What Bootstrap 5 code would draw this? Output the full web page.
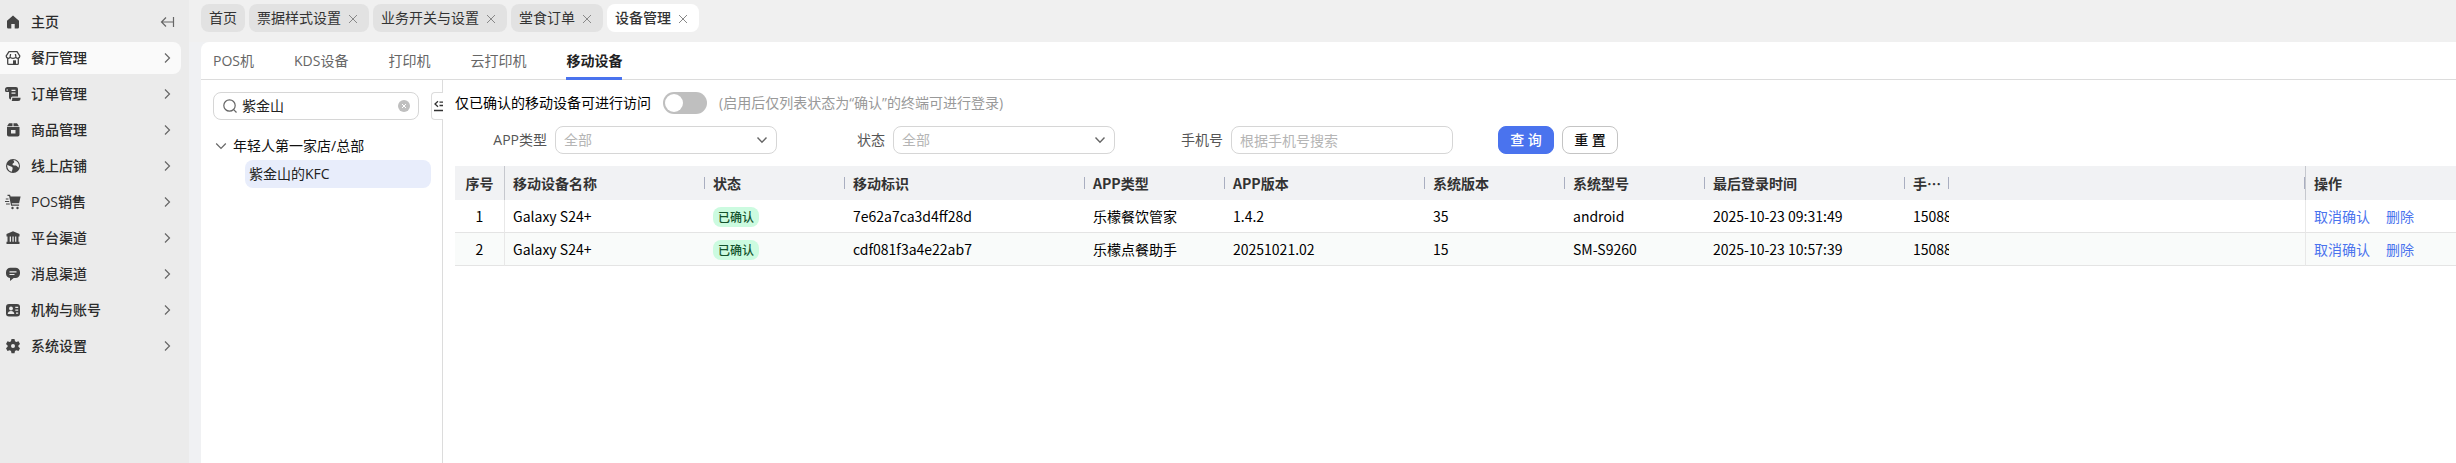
<!DOCTYPE html>
<html lang="zh-CN">
<head>
<meta charset="utf-8">
<meta name="viewport" content="width=device-width, initial-scale=1">
<title>设备管理</title>
<link rel="stylesheet" href="https://cdn.jsdelivr.net/npm/bootstrap@5.3.0/dist/css/bootstrap.min.css">
<style>
:root { --brand: #4a73ee; --line: #dcdcdc; }
body { font: 14px/20px "Open Sans", "Noto Sans CJK SC", sans-serif; color: #000; background: #f0f1f3; }
a { text-decoration: none; }
.side { width: 189px; flex: none; background: #ebebeb; padding-top: 6px; }
.side-link { height: 32px; gap: 10px; padding: 0 6px 0 5px; margin: 0 8px 4px 0; color: #2b2b2b; border-radius: 0 8px 8px 0; font-weight: 500; }
.side-link.active { background: #fafafa; }
.side-link svg { width: 16px; height: 16px; flex: none; fill: #444; }
.side-link .arrow, .ln { fill: none !important; stroke: #666; stroke-width: 1.2; }
.tabs-bar { background: #f0f0f0; height: 42px; padding: 4px 12px 0; gap: 4px; }
.page-tab { height: 28px; padding: 0 8px; gap: 6px; border-radius: 8px; background: #e2e2e2; color: #333; }
.page-tab a { color: inherit; }
.page-tab.active { background: #fff; font-weight: 500; }
.page-tab button { width: 14px; height: 20px; padding: 2px 0 0; border: 0; background: none; display: flex; align-items: center; justify-content: flex-start; }
.page-tab svg { width: 12px; height: 12px; stroke: #888; }
.panel { margin-left: 12px; background: #fff; border-top-left-radius: 8px; }
.sub-tabs { height: 37px; padding: 0 12px; gap: 40px; border-bottom: 1px solid var(--line); box-sizing: content-box; }
.sub-tabs a { color: #666; line-height: 38px; height: 38px; }
.sub-tabs a.active { color: #222; font-weight: 700; border-bottom: 3px solid var(--brand); border-radius: 2px 2px 0 0; }
.tree { width: 242px; flex: none; border-right: 1px solid var(--line); padding: 12px 11px 0 12px; }
.tree-top { gap: 12px; margin-right: -12px; }
.box { height: 28px; border: 1px solid #d6d6d6; border-radius: 8px; background-color: #fff; }
.find { width: 206px; padding: 0 8px; gap: 4px; }
.find input { border: 0; outline: 0; padding: 0; min-width: 0; flex: 1; color: #222; }
.plain { border: 0; background: none; padding: 0; display: flex; }
.fold { width: 12px; height: 28px; border: 1px solid #dcdcdc; border-right: 0; border-radius: 4px 0 0 4px; background: #fff; padding: 0 0 0 2px; display: flex; align-items: center; justify-content: flex-start; overflow: hidden; }
.fold svg { flex: none; }
.tree-row { height: 28px; color: #111; padding-left: 2px; gap: 6px; margin-top: 12px; }
.tree-leaf { display: block; margin-left: 32px; height: 28px; line-height: 28px; padding-left: 4px; border-radius: 8px; background: #e8edfb; color: #222; }
.content { min-width: 0; padding: 12px 0 0 12px; }
.toggle-row { gap: 12px; height: 22px; }
.toggle-row .form-switch { min-height: 0; margin: 0; padding: 0; display: flex; }
.form-switch .form-check-input { width: 44px; height: 22px; margin: 0; border: 0; background-color: #bfbfbf; 
  background-image: url("data:image/svg+xml,%3csvg xmlns='http://www.w3.org/2000/svg' viewBox='0 0 22 22'%3e%3ccircle cx='11' cy='11' r='9' fill='%23fff'/%3e%3c/svg%3e"); }
.filters { margin-top: 12px; height: 28px; }
.filters label { width: 92px; text-align: right; color: #555; }
.field { gap: 8px; margin-right: 16px; width: 322px; }
.field .box { width: 222px; padding: 0 8px; color: #b5b5b5; font-size: 14px; line-height: 20px; }
.field select.box { background-position: right 6px center; background-size: 16px; background-image: url("data:image/svg+xml,%3csvg xmlns='http://www.w3.org/2000/svg' viewBox='0 0 16 16'%3e%3cpath d='M3.5 5.5 8 10.2l4.500-4.700' fill='none' stroke='%23666' stroke-width='1.400'/%3e%3c/svg%3e"); }
.field input::placeholder { color: #b5b5b5; }
.actions { gap: 8px; margin-left: 29px; }
.btn-act { width: 56px; height: 28px; padding: 0; font-size: 14px; line-height: 20px; border-radius: 8px; font-weight: 500; }
.btn-query { background: var(--brand); border-color: var(--brand); color: #fff; }
.btn-reset { border-color: #c4c4c4; color: #111; background: #fff; }
.grid { font-family: "Noto Sans CJK SC", sans-serif; table-layout: fixed; width: 100%; margin-top: 12px; border-collapse: separate; border-spacing: 0; }
.grid th, .grid td { padding: 0 0 0 8px; white-space: nowrap; overflow: hidden; }
.grid th { height: 34px; background: #f1f2f4; color: #333; font-weight: 700; }
.grid td { height: 33px; border-bottom: 1px solid #e4e4e4; }
.grid tbody tr:nth-child(2) td { background: #f9fbfa; }
.grid th.sep { background: linear-gradient(#a9aec0, #a9aec0) right center / 1px 12px no-repeat #f1f2f4; }
.grid .first { text-align: center; padding: 0; border-right: 1px solid #e8e8e8; }
.grid .ops { border-left: 1px solid #e8e8e8; }
.grid th.first, .grid th.ops { border-color: #c6c8ce; }
.grid .ops a { color: var(--brand); margin-right: 16px; }
.state { display: inline-block; font-size: 12px; line-height: 20px; padding: 0 5px; border-radius: 8px; background: #ccfbe0; color: #14532d; vertical-align: middle; font-weight: 500; }
</style>
</head>
<body>
<div class="d-flex min-vh-100">
  <nav class="side">
    <a href="#" class="side-link d-flex align-items-center"><svg viewBox="0 0 16 16"><path d="M8 1.500 14 6.800V13.200a1.300 1.300 0 0 1-1.300 1.300H9.700V10H6.300v4.500h-3A1.300 1.300 0 0 1 2 13.200V6.800z"/></svg><span class="flex-grow-1">主页</span><svg class="arrow" viewBox="0 0 16 16"><path d="M14.500 3v10M14.500 8H3M7 3.500 2.500 8 7 12.500"/></svg></a>
    <a href="#" class="side-link active d-flex align-items-center"><svg viewBox="0 0 16 16"><path d="M4 1.700h8l2.800 4.300c0 2.700-3.300 3-3.900.9-.7 1.900-5.100 1.900-5.800 0C4.500 9 1.200 8.700 1.200 6zM5.100 6.800 5.600 4M10.900 6.800 10.400 4M2.700 8.500v5a.9.9 0 0 0 .9.900h8.800a.9.9 0 0 0 .9-.9v-5" fill="none" stroke="#444" stroke-width="1.300"/><path d="M8 10.300h3v4H8z"/></svg><span class="flex-grow-1">餐厅管理</span><svg class="arrow" viewBox="0 0 16 16"><path d="m6 3.500 4.500 4.500L6 12.500"/></svg></a>
    <a href="#" class="side-link d-flex align-items-center"><svg viewBox="0 0 16 16"><path fill-rule="evenodd" d="M2.500 1H11a2 2 0 0 1 2 2v7.500H7.500A1.500 1.500 0 0 0 6 12v1.500a2 2 0 0 1-2-2V6H1.500A1.500 1.500 0 0 1 0 4.500v-1A2.500 2.500 0 0 1 2.500 1zm4 2.800v1.200h4V3.800zm0 2.800v1.200h4V6.600zM1.500 3.500v1H3v-1zM7.200 11.700h8.300v.8a2.500 2.500 0 0 1-2.500 2.500H6.500c.7-.6.700-1.500.7-3.300z"/></svg><span class="flex-grow-1">订单管理</span><svg class="arrow" viewBox="0 0 16 16"><path d="m6 3.500 4.500 4.500L6 12.500"/></svg></a>
    <a href="#" class="side-link d-flex align-items-center"><svg viewBox="0 0 16 16"><path fill-rule="evenodd" d="M4 1.200h3.500v3H2zM8.500 1.200H12l2 3H8.500zM2 5h12.500v7.700a1.800 1.800 0 0 1-1.800 1.800H3.800A1.800 1.800 0 0 1 2 12.700zM6 8v3.500h4.500V8z"/></svg><span class="flex-grow-1">商品管理</span><svg class="arrow" viewBox="0 0 16 16"><path d="m6 3.500 4.500 4.500L6 12.500"/></svg></a>
    <a href="#" class="side-link d-flex align-items-center"><svg viewBox="0 0 16 16"><circle cx="8" cy="8" r="7"/><path fill="#ebebeb" d="M2.300 6.800c1.600 1.500 3.500 1.200 4.800 2.200 1.200 1 .2 2.500-.3 4.800A6 6 0 0 1 2.300 6.800zM8.500 2.100a6 6 0 0 1 5.300 7.300c-1.200.3-1.600-1.300-2.900-1.800-1-.4-2.600.3-3.300-.8-.7-1.200 1-1.500 1.500-2.300.5-.900-.7-1.500-.6-2.400z"/></svg><span class="flex-grow-1">线上店铺</span><svg class="arrow" viewBox="0 0 16 16"><path d="m6 3.500 4.500 4.500L6 12.500"/></svg></a>
    <a href="#" class="side-link d-flex align-items-center"><svg viewBox="0 0 16 16"><path d="M2.500.8H5l.6 1.700H15.600l-1.500 6.700H6.800l.3 1.300h7v1.200H6.100L4.100 2H2.500zM.8 4.500h2.700v1H.8zM0 7h4.200v1H0zM1 9.500h3.800v1H1z"/><circle cx="7.500" cy="14" r="1.200"/><circle cx="12.500" cy="14" r="1.200"/></svg><span class="flex-grow-1">POS销售</span><svg class="arrow" viewBox="0 0 16 16"><path d="m6 3.500 4.500 4.500L6 12.500"/></svg></a>
    <a href="#" class="side-link d-flex align-items-center"><svg viewBox="0 0 16 16"><path d="M8 1.200 14.500 4v2.500h-13V4zM2.500 6.500H4.700V12H2.500zM6 6.500h1.400V12H6zM8.700 6.500h1.400V12H8.700zM11.300 6.500h2.200V12h-2.200zM1.500 11.800h13v2.200h-13z"/></svg><span class="flex-grow-1">平台渠道</span><svg class="arrow" viewBox="0 0 16 16"><path d="m6 3.500 4.500 4.500L6 12.500"/></svg></a>
    <a href="#" class="side-link d-flex align-items-center"><svg viewBox="0 0 16 16"><path fill-rule="evenodd" d="M5.500 1.700h5a4.500 4.500 0 0 1 4.500 4.600v1.200a4.500 4.500 0 0 1-4.500 4.500H8.700L5 15v-3.100a4.500 4.500 0 0 1-4-4.400V6.300a4.500 4.500 0 0 1 4.500-4.600zM4.500 5.300v1.200h7V5.300zm0 2.600v1.200h5V7.900z"/></svg><span class="flex-grow-1">消息渠道</span><svg class="arrow" viewBox="0 0 16 16"><path d="m6 3.500 4.500 4.500L6 12.500"/></svg></a>
    <a href="#" class="side-link d-flex align-items-center"><svg viewBox="0 0 16 16"><rect x="1" y="2" width="14" height="12.500" rx="3"/><g fill="#ebebeb"><circle cx="6" cy="6.500" r="1.900"/><path d="M2.700 12c0-4 6.600-4 6.600 0zM10.300 4.800h2.900V6h-2.900zM10.300 7.500h2.900v1.200h-2.900zM11 10.500h2.200v1.300H11z"/></g></svg><span class="flex-grow-1">机构与账号</span><svg class="arrow" viewBox="0 0 16 16"><path d="m6 3.500 4.500 4.500L6 12.500"/></svg></a>
    <a href="#" class="side-link d-flex align-items-center"><svg viewBox="0 0 16 16"><path fill-rule="evenodd" d="M6.500 1h3l.5 2.200 1.300.8 2.200-.7 1.500 2.600L13.400 7.400v1.400l1.600 1.500-1.500 2.600-2.200-.7-1.300.8-.5 2.200h-3L6 13l-1.300-.8-2.200.7L1 10.300l1.600-1.500V7.400L1 5.900l1.500-2.600 2.200.7L6 3.200zM8 6a2 2 0 1 0 0 4 2 2 0 0 0 0-4z"/></svg><span class="flex-grow-1">系统设置</span><svg class="arrow" viewBox="0 0 16 16"><path d="m6 3.500 4.500 4.500L6 12.500"/></svg></a>
  </nav>

  <main class="flex-grow-1 d-flex flex-column" style="min-width:0">
    <div class="tabs-bar d-flex">
      <div class="page-tab d-flex align-items-center"><a href="#">首页</a></div>
      <div class="page-tab d-flex align-items-center"><a href="#">票据样式设置</a><button aria-label="关闭"><svg viewBox="0 0 12 12"><path d="m2 2 8 8M10 2l-8 8"/></svg></button></div>
      <div class="page-tab d-flex align-items-center"><a href="#">业务开关与设置</a><button aria-label="关闭"><svg viewBox="0 0 12 12"><path d="m2 2 8 8M10 2l-8 8"/></svg></button></div>
      <div class="page-tab d-flex align-items-center"><a href="#">堂食订单</a><button aria-label="关闭"><svg viewBox="0 0 12 12"><path d="m2 2 8 8M10 2l-8 8"/></svg></button></div>
      <div class="page-tab active d-flex align-items-center"><a href="#">设备管理</a><button aria-label="关闭"><svg viewBox="0 0 12 12"><path d="m2 2 8 8M10 2l-8 8"/></svg></button></div>
    </div>
    <div class="panel flex-grow-1 d-flex flex-column">
      <nav class="sub-tabs d-flex">
        <a href="#">POS机</a><a href="#">KDS设备</a><a href="#">打印机</a><a href="#">云打印机</a><a href="#" class="active">移动设备</a>
      </nav>
      <div class="flex-grow-1 d-flex">
        <aside class="tree">
          <div class="tree-top d-flex">
            <div class="box find d-flex align-items-center">
              <svg class="ln flex-shrink-0" width="16" height="16" viewBox="0 0 16 16"><circle cx="7.500" cy="7.500" r="5.700"/><path d="m11.700 11.700 2.800 2.800"/></svg>
              <input type="text" value="紫金山" aria-label="搜索门店">
              <button class="plain" aria-label="清除"><svg width="12" height="12" viewBox="0 0 12 12"><circle cx="6" cy="6" r="6" fill="#bfbfbf"/><path d="m4 4 4 4M8 4 4 8" stroke="#fff"/></svg></button>
            </div>
            <button class="fold" aria-label="收起"><svg width="12" height="12" viewBox="0 0 12 12" fill="none" stroke="#333" stroke-width="1.300"><path d="M4 1.200 1 4l3 2.800M5.500 2.200H12M5.500 5.500H12M0 10.500h12"/></svg></button>
          </div>
          <div class="tree-row d-flex align-items-center"><svg class="ln" width="12" height="12" viewBox="0 0 12 12"><path d="M1.200 3.500 6 8.500l4.800-5"/></svg><span>年轻人第一家店/总部</span></div>
          <a href="#" class="tree-leaf">紫金山的KFC</a>
        </aside>

        <section class="content flex-grow-1">
          <div class="toggle-row d-flex align-items-center">
            <label for="only">仅已确认的移动设备可进行访问</label>
            <div class="form-check form-switch"><input class="form-check-input" type="checkbox" role="switch" id="only"></div>
            <span style="color:#999">(启用后仅列表状态为“确认”的终端可进行登录)</span>
          </div>
          <form class="filters d-flex">
            <div class="field d-flex align-items-center"><label for="app">APP类型</label><select id="app" class="form-select box"><option>全部</option></select></div>
            <div class="field d-flex align-items-center"><label for="st">状态</label><select id="st" class="form-select box"><option>全部</option></select></div>
            <div class="field d-flex align-items-center"><label for="tel">手机号</label><input id="tel" type="text" class="form-control box" placeholder="根据手机号搜索"></div>
            <div class="actions d-flex"><button type="button" class="btn btn-act btn-query">查 询</button><button type="button" class="btn btn-act btn-reset">重 置</button></div>
          </form>
          <table class="grid">
            <colgroup><col style="width:50px"><col style="width:200px"><col style="width:140px"><col style="width:240px"><col style="width:140px"><col style="width:200px"><col style="width:140px"><col style="width:140px"><col style="width:200px"><col style="width:44px"><col><col style="width:151px"></colgroup>
            <thead><tr><th class="first">序号</th><th class="sep">移动设备名称</th><th class="sep">状态</th><th class="sep">移动标识</th><th class="sep">APP类型</th><th class="sep">APP版本</th><th class="sep">系统版本</th><th class="sep">系统型号</th><th class="sep">最后登录时间</th><th class="sep">手…</th><th class="sep"></th><th class="ops">操作</th></tr></thead>
            <tbody>
              <tr><td class="first">1</td><td>Galaxy S24+</td><td><span class="state">已确认</span></td><td>7e62a7ca3d4ff28d</td><td>乐檬餐饮管家</td><td>1.4.2</td><td>35</td><td>android</td><td>2025-10-23 09:31:49</td><td>15088</td><td></td><td class="ops"><a href="#">取消确认</a><a href="#">删除</a></td></tr>
              <tr><td class="first">2</td><td>Galaxy S24+</td><td><span class="state">已确认</span></td><td>cdf081f3a4e22ab7</td><td>乐檬点餐助手</td><td>20251021.02</td><td>15</td><td>SM-S9260</td><td>2025-10-23 10:57:39</td><td>15088</td><td></td><td class="ops"><a href="#">取消确认</a><a href="#">删除</a></td></tr>
            </tbody>
          </table>
        </section>
      </div>
    </div>
  </main>
</div>
<script src="https://cdn.jsdelivr.net/npm/bootstrap@5.3.0/dist/js/bootstrap.bundle.min.js"></script>
</body>
</html>
